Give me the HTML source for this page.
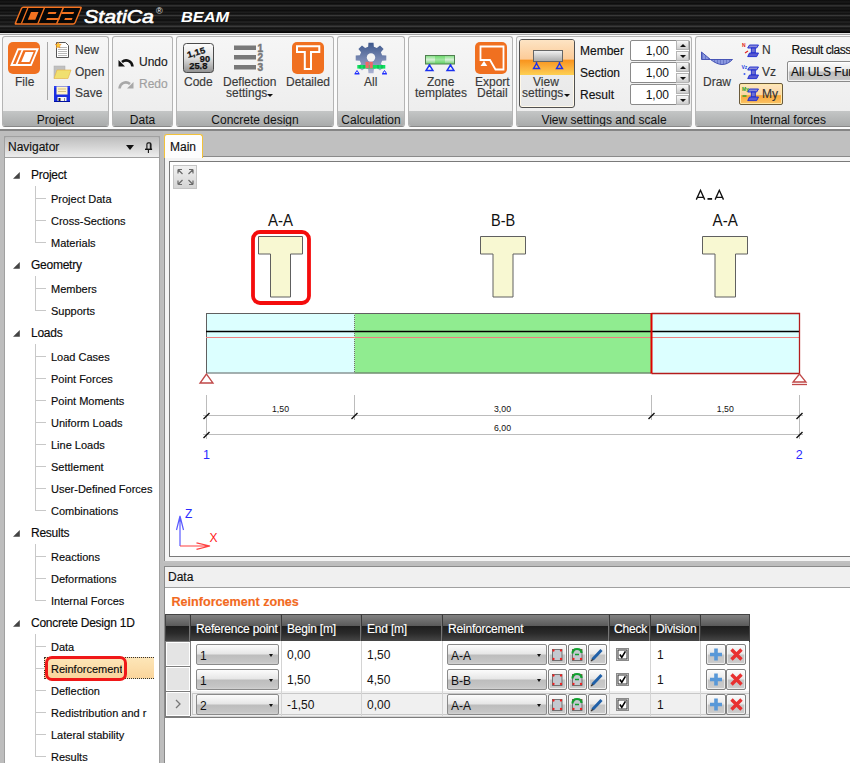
<!DOCTYPE html>
<html><head><meta charset="utf-8">
<style>
*{margin:0;padding:0;box-sizing:border-box}
html,body{width:850px;height:763px;overflow:hidden;background:#bdbdbd;font-family:"Liberation Sans",sans-serif;position:relative}
.a{position:absolute}
svg{position:absolute;overflow:visible}
#hdr{left:0;top:0;width:850px;height:33px;background:linear-gradient(180deg,#0c0c0c 0,#1a1a1a 2px,#0a0a0a 4px,#262626 5px,#3a3a3a 6px,#101010 7px,#181818 9px,#0a0a0a 11px,#222 12px,#0d0d0d 14px,#383838 15.5px,#121212 17px,#1c1c1c 19px,#0a0a0a 20px,#262626 22px,#101010 24px,#3a3a3a 26.5px,#0f0f0f 28px,#202020 30px,#050505 32px)}
#rib{left:0;top:33px;width:850px;height:98px;background:#fbfbfb;border-top:1px solid #e4e4e4;border-bottom:2px solid #858585}
#rib:before{content:"";position:absolute;left:0;right:0;top:0;height:1px;background:#a4a4a4}
.grp{position:absolute;top:36px;height:91px;border:1px solid #b4b4b4;border-bottom-color:#888;border-radius:3px;background:linear-gradient(#f6f6f6,#ececec);overflow:hidden}
.grp .lbl{position:absolute;left:0;right:0;bottom:0;height:15px;background:linear-gradient(#c4c6c6,#a9abab);font-size:12px;color:#111;text-align:center;line-height:14px;padding-top:2px}
.t{position:absolute;white-space:nowrap;color:#3a3a3a;font-size:12px;line-height:14px;-webkit-text-stroke:0.15px currentColor}
.nav{font-size:11px;color:#0a0a0a}
.navp{font-size:12px;color:#0a0a0a;letter-spacing:-0.25px}
.vl{left:35px;width:1px;background:#c8c8c8}
.hl{left:36px;width:10px;height:1px;background:#c8c8c8}
.th{position:absolute;top:615px;height:26px;color:#fff;font-size:12px;line-height:26px;padding-left:6px;white-space:nowrap;overflow:hidden;border-left:1px solid #5a5a5a;border-right:1px solid #2a2a2a}
.cell{position:absolute;font-size:12px;color:#111;line-height:14px;white-space:nowrap}
.dd{position:absolute;height:21px;border:1px solid #8a8a8a;border-radius:2px;background:linear-gradient(#fcfcfc 0%,#e6e6e6 47%,#bdbdbd 53%,#c6c6c6 90%,#d2d2d2 100%);font-size:12px;color:#111;padding-left:3px;line-height:22px}
.dd:after{content:"";position:absolute;right:5px;top:9px;border-left:2.5px solid transparent;border-right:2.5px solid transparent;border-top:3px solid #111}
.sb{position:absolute;width:19px;height:21px;border:1px solid #808080;border-radius:2px;background:linear-gradient(#fcfcfc 0%,#e8e8e8 47%,#c4c4c4 53%,#cacaca 90%,#d4d4d4 100%);box-shadow:inset 0 0 0 1px rgba(255,255,255,.6)}
.spin{position:absolute;left:630px;width:60px;height:21px;background:#fff;border:1px solid #8a8a8a;border-radius:2px;font-size:12px;color:#111;text-align:right;padding-right:20px;line-height:20px}
.sp{position:absolute;left:676px;width:13px;height:10px;border:1px solid #b4b4b4;background:linear-gradient(#f8f8f8,#cccccc)}
.sp:after{content:"";position:absolute;left:3px;top:3px;border-left:3px solid transparent;border-right:3px solid transparent;border-bottom:3px solid #111}
.sp.dn:after{border-bottom:none;border-top:3px solid #111}
</style></head><body>
<div id="hdr" class="a"></div>
<!-- logo -->
<svg style="left:0;top:0" width="240" height="33">
 <g transform="matrix(1,0,-0.41,1,21.5,6.4)">
  <rect x="0" y="0" width="61" height="18.3" rx="2" fill="#f27220"/>
  <rect x="1.5" y="1.5" width="58" height="15.3" rx="1" fill="#060606"/>
  <rect x="6.2" y="1" width="1.4" height="16" fill="#f27220"/>
  <rect x="11.8" y="5.6" width="7.5" height="7.8" fill="#f27220"/>
  <rect x="22.7" y="1" width="1.5" height="16" fill="#f27220"/>
  <rect x="29.3" y="5.6" width="8" height="2.1" fill="#f27220"/>
  <rect x="30.2" y="11.5" width="13" height="2.1" fill="#f27220"/>
  <rect x="41.4" y="1" width="1.7" height="16" fill="#f27220"/>
  <rect x="43" y="5.6" width="12" height="2.1" fill="#f27220"/>
  <rect x="48.3" y="11.5" width="7.5" height="2.1" fill="#f27220"/>
 </g>
 <text x="84" y="23" font-family="Liberation Sans" font-size="18.5" font-style="italic" fill="#fff" stroke="#fff" stroke-width="0.6" textLength="70" lengthAdjust="spacingAndGlyphs">StatiCa</text>
 <text x="156" y="14" font-family="Liberation Sans" font-size="9" fill="#eee">®</text>
 <text x="181" y="22" font-family="Liberation Sans" font-size="15" font-weight="bold" font-style="italic" fill="#fff" textLength="48" lengthAdjust="spacingAndGlyphs">BEAM</text>
</svg>

<div id="rib" class="a"></div>

<!-- ribbon groups -->
<div class="grp" style="left:2px;width:107px"><div class="lbl">Project</div></div>
<div class="grp" style="left:112px;width:61px"><div class="lbl">Data</div></div>
<div class="grp" style="left:176px;width:158px"><div class="lbl">Concrete design</div></div>
<div class="grp" style="left:337px;width:68px"><div class="lbl">Calculation</div></div>
<div class="grp" style="left:408px;width:105px"><div class="lbl"></div></div>
<div class="grp" style="left:516px;width:176px"><div class="lbl">View settings and scale</div></div>
<div class="grp" style="left:695px;width:186px"><div class="lbl">Internal forces</div></div>

<!-- Project group -->
<svg style="left:8px;top:42px" width="32" height="32">
 <rect x="0" y="0" width="32" height="32" rx="5" fill="#f07020"/>
 <g transform="matrix(1,0,-0.42,1,9.5,6.3)">
  <rect x="1" y="1" width="19.5" height="15.7" fill="none" stroke="#fff" stroke-width="2"/>
  <rect x="4.8" y="1" width="1.9" height="15.7" fill="#fff"/>
  <rect x="9.5" y="3.8" width="8.2" height="10" fill="#fff"/>
 </g>
</svg>
<div class="t" style="left:15px;top:75px">File</div>
<div class="a" style="left:47px;top:42px;width:1px;height:58px;background:#a8a8a8"></div>
<svg style="left:55px;top:42px" width="16" height="16">
 <path d="M1.5 0.5h9l3 3v12h-12z" fill="#fff" stroke="#555"/>
 <path d="M3 5.5h9M3 7.5h9M3 9.5h9M3 11.5h9M3 13.5h9" stroke="#b0b0b0" stroke-width="0.9"/>
 <path d="M3.20 0.20 L4.02 2.27 L6.24 2.41 L4.53 3.83 L5.08 5.99 L3.20 4.80 L1.32 5.99 L1.87 3.83 L0.16 2.41 L2.38 2.27Z" fill="#ffd030" stroke="#f08a20" stroke-width="0.6"/>
</svg>
<div class="t" style="left:75px;top:43px">New</div>
<svg style="left:54px;top:66px" width="17" height="13">
 <rect x="0" y="0" width="11" height="12" fill="#c0c0c0" stroke="#aaa" stroke-width="0.5"/>
 <path d="M3 4h14l-3 8.5h-14z" fill="#f0e070" stroke="#e8b040" stroke-width="0.6"/>
</svg>
<div class="t" style="left:75px;top:65px">Open</div>
<svg style="left:54px;top:86px" width="16" height="16">
 <rect x="0" y="0" width="16" height="16" fill="#1a2ee0"/>
 <rect x="0" y="0" width="16" height="2" fill="#2a3ef0"/>
 <rect x="2.5" y="0.5" width="11" height="8" fill="#fff4c8"/>
 <path d="M4 3h8M4 5.5h8" stroke="#c8b070" stroke-width="0.8"/>
 <rect x="3.5" y="11" width="9" height="5" fill="#f4f4f4"/>
 <rect x="4.5" y="12" width="2" height="4" fill="#222"/>
 <rect x="10" y="12" width="1" height="4" fill="#888"/>
 <rect x="0" y="15" width="16" height="1" fill="#0010a0"/>
</svg>
<div class="t" style="left:75px;top:86px">Save</div>

<!-- Data group -->
<svg style="left:118px;top:57px" width="16" height="11">
 <path d="M14.5 9.5 C14 4, 8 1.5, 4 5" stroke="#111" stroke-width="2.6" fill="none"/>
 <path d="M0.5 3 L0.5 9.5 L7 9.5Z" fill="#111"/>
</svg>
<div class="t" style="left:139px;top:55px;color:#1a1a1a">Undo</div>
<svg style="left:118px;top:79px" width="16" height="11">
 <path d="M1.5 9.5 C2 4, 8 1.5, 12 5" stroke="#a8a8a8" stroke-width="2.6" fill="none"/>
 <path d="M15.5 3 L15.5 9.5 L9 9.5Z" fill="#a8a8a8"/>
</svg>
<div class="t" style="left:139px;top:77px;color:#a0a0a0">Redo</div>

<!-- Concrete design -->
<svg style="left:183px;top:43px" width="31" height="30">
 <defs><linearGradient id="gc" x1="0" y1="0" x2="0" y2="1"><stop offset="0" stop-color="#fdfdfd"/><stop offset="0.5" stop-color="#e0e0e0"/><stop offset="1" stop-color="#909090"/></linearGradient></defs>
 <rect x="0.5" y="0.5" width="30" height="29" rx="3" fill="url(#gc)" stroke="#4a4a4a"/>
 <g font-family="Liberation Sans" font-weight="bold" fill="#111" stroke="#111" stroke-width="0.25">
 <text x="5" y="15" font-size="8.6" transform="rotate(-16 5 15)" textLength="18.5" lengthAdjust="spacingAndGlyphs">1,15</text>
 <text x="16.8" y="18.8" font-size="8.4" textLength="10.2" lengthAdjust="spacingAndGlyphs">90</text>
 <text x="6.2" y="25.6" font-size="8.6" textLength="18.2" lengthAdjust="spacingAndGlyphs">25.8</text>
 </g>
</svg>
<div class="t" style="left:184px;top:75px">Code</div>
<svg style="left:233px;top:44px" width="34" height="28">
 <rect x="1" y="1.5" width="22" height="4.5" fill="#787878"/>
 <rect x="1" y="11" width="22" height="4.5" fill="#787878"/>
 <rect x="1" y="21" width="22" height="4.5" fill="#787878"/>
 <g font-family="Liberation Sans" font-size="10" font-weight="bold" fill="#787878" stroke="#787878" stroke-width="0.5">
 <text x="24.5" y="7.5">1</text><text x="24.5" y="17">2</text><text x="24.5" y="27">3</text>
 </g>
</svg>
<div class="t" style="left:223px;top:75px">Deflection</div>
<div class="t" style="left:226px;top:86px">settings</div>
<div class="a" style="left:267px;top:94px;border-left:3px solid transparent;border-right:3px solid transparent;border-top:3px solid #111"></div>
<svg style="left:292px;top:42px" width="32" height="32">
 <rect x="0" y="0" width="32" height="32" rx="5" fill="#f07020"/>
 <path d="M5 4.2H27.3V10H19V27H12.8V10H5Z" fill="none" stroke="#fff" stroke-width="2"/>
</svg>
<div class="t" style="left:286px;top:75px">Detailed</div>

<!-- Calculation -->
<svg style="left:353px;top:40px" width="36" height="36">
 <defs><linearGradient id="gg" x1="0" y1="0" x2="0" y2="1"><stop offset="0" stop-color="#3d578c"/><stop offset="1" stop-color="#aab2d2"/></linearGradient></defs>
 <path transform="translate(18,18)" d="M-2.86 -11.14 L-2.54 -15.29 L2.54 -15.29 L2.86 -11.14 L5.85 -9.90 L9.01 -12.61 L12.61 -9.01 L9.90 -5.85 L11.14 -2.86 L15.29 -2.54 L15.29 2.54 L11.14 2.86 L9.90 5.85 L12.61 9.01 L9.01 12.61 L5.85 9.90 L2.86 11.14 L2.54 15.29 L-2.54 15.29 L-2.86 11.14 L-5.85 9.90 L-9.01 12.61 L-12.61 9.01 L-9.90 5.85 L-11.14 2.86 L-15.29 2.54 L-15.29 -2.54 L-11.14 -2.86 L-9.90 -5.85 L-12.61 -9.01 L-9.01 -12.61 L-5.85 -9.90Z" fill="url(#gg)"/>
 <circle cx="18" cy="17.5" r="4.2" fill="#f4f4f4"/>
 <rect x="4.3" y="25" width="28" height="3.6" fill="#10e060"/>
 <path d="M7 25v3.6M11 25v3.6M25 25v3.6M29 25v3.6" stroke="#0a9a40" stroke-width="0.7"/>
 <rect x="12.5" y="21.8" width="3.3" height="6.5" fill="#f06868"/>
 <rect x="16.5" y="21.8" width="3.3" height="6.5" fill="#f06868"/>
 <path d="M4 30.5l-2 3h4z M31.5 30.5l-2 3h4z" fill="none" stroke="#2030ff" stroke-width="1"/>
 <path d="M1.5 34h5M29 34h5" stroke="#2030ff" stroke-width="1"/>
</svg>
<div class="t" style="left:364px;top:75px">All</div>

<!-- zone templates -->
<svg style="left:423px;top:53px" width="34" height="19">
 <defs><linearGradient id="gz" x1="0" y1="0" x2="0" y2="1"><stop offset="0" stop-color="#80e080"/><stop offset="0.5" stop-color="#d8f0d8"/><stop offset="1" stop-color="#70d070"/></linearGradient></defs>
 <rect x="2.5" y="2.5" width="29" height="8.5" fill="url(#gz)" stroke="#508050" stroke-width="1"/>
 <rect x="12" y="3" width="10" height="7.5" fill="#40d040" opacity="0.35"/>
 <path d="M6.5 12l-3.5 5.5h7z M27.5 12l-3.5 5.5h7z" fill="none" stroke="#1a30f0" stroke-width="1.4"/>
 <path d="M6.5 11v2M27.5 11v2" stroke="#1a30f0" stroke-width="1.4"/>
</svg>
<div class="t" style="left:427px;top:75px">Zone</div>
<div class="t" style="left:415px;top:86px">templates</div>
<svg style="left:475px;top:42px" width="32" height="32">
 <rect x="0" y="0" width="32" height="32" rx="5" fill="#f07020"/>
 <path d="M5.5 4.5h23v23h-8l-5.5-9.5h-9.5z" fill="none" stroke="#fff" stroke-width="1.8" stroke-linejoin="miter"/>
 <path d="M5.5 24l3.5-5 3.3 5z" fill="#fff"/>
</svg>
<div class="t" style="left:475px;top:75px">Export</div>
<div class="t" style="left:477px;top:86px">Detail</div>

<!-- view settings -->
<div class="a" style="left:519px;top:39px;width:56px;height:69px;border:1px solid #505050;border-radius:3px;background:linear-gradient(#f0f0f0,#e8e8e8);overflow:hidden;box-shadow:inset 0 0 0 1px #fff8e8">
 <div class="a" style="left:0;top:0;width:54px;height:35px;background:linear-gradient(#fde4c4 0%,#fccb98 55%,#f9931c 57%,#fbb23e 80%,#fdd052 100%)"></div>
</div>
<svg style="left:530px;top:50px" width="36" height="24">
 <defs><linearGradient id="gb" x1="0" y1="0" x2="0" y2="1"><stop offset="0" stop-color="#f4f4f4"/><stop offset="1" stop-color="#a8a8a8"/></linearGradient></defs>
 <rect x="3.5" y="0.5" width="29" height="11" fill="url(#gb)" stroke="#666"/>
 <path d="M6.5 13.5l-3 5h6z M29.5 13.5l-3 5h6z" fill="none" stroke="#1a30f0" stroke-width="1.4"/>
 <path d="M6.5 12v2M29.5 12v2" stroke="#1a30f0" stroke-width="1.4"/>
</svg>
<div class="t" style="left:533px;top:75px">View</div>
<div class="t" style="left:522px;top:86px">settings</div>
<div class="a" style="left:564px;top:94px;border-left:3px solid transparent;border-right:3px solid transparent;border-top:3px solid #111"></div>

<div class="t" style="left:580px;top:44px;color:#111">Member</div>
<div class="t" style="left:580px;top:66px;color:#111">Section</div>
<div class="t" style="left:580px;top:88px;color:#111">Result</div>
<div class="spin" style="top:40px">1,00</div>
<div class="spin" style="top:62px">1,00</div>
<div class="spin" style="top:84px">1,00</div>
<div class="sp" style="top:40px"></div><div class="sp dn" style="top:51px"></div>
<div class="sp" style="top:62px"></div><div class="sp dn" style="top:73px"></div>
<div class="sp" style="top:84px"></div><div class="sp dn" style="top:95px"></div>

<!-- internal forces -->
<svg style="left:700px;top:50px" width="34" height="16">
 <defs><pattern id="pd" width="3" height="10" patternUnits="userSpaceOnUse"><rect width="3" height="10" fill="#8a98e0"/><rect x="2" width="1" height="10" fill="#6a78c8"/></pattern></defs>
 <path d="M1.5 2 L10.5 9.5 Z" fill="none"/>
 <path d="M1.5 2 V9.5 H10.5 Z" fill="url(#pd)" stroke="#3a48b0" stroke-width="0.9"/>
 <path d="M10.5 9.5 C15 13, 19 14.5, 22 14.5 C26 14.5, 29 13, 32.5 9.5 Z" fill="url(#pd)" stroke="#3a48b0" stroke-width="0.9"/>
</svg>
<div class="t" style="left:703px;top:75px">Draw</div>
<div class="a" style="left:739px;top:83px;width:44px;height:22px;border:1px solid #6a5a3a;border-radius:2px;background:linear-gradient(#fde6c0 0%,#fcd6a0 55%,#f9a838 58%,#fbc468 100%);box-shadow:inset 0 0 0 1px #ffe8a8"></div>
<svg style="left:742px;top:42px" width="18" height="62">
 <defs><linearGradient id="gi" x1="0" y1="0" x2="1" y2="0"><stop offset="0" stop-color="#2030d8"/><stop offset="0.5" stop-color="#8a90e0"/><stop offset="1" stop-color="#2a38c8"/></linearGradient></defs>
 <g><path d="M7.5 3h9l-1.8 3h-9z" fill="#8a8ad8" stroke="#1a28d0" stroke-width="0.9"/><rect x="9.3" y="6" width="4" height="5" fill="#7070d0" stroke="#1a28d0" stroke-width="0.9"/><path d="M7.5 11h9l-1.8 3.6h-9z" fill="#5a5ad0" stroke="#1a28d0" stroke-width="0.9"/><path d="M7.5 25h9l-1.8 3h-9z" fill="#8a8ad8" stroke="#1a28d0" stroke-width="0.9"/><rect x="9.3" y="28" width="4" height="5" fill="#7070d0" stroke="#1a28d0" stroke-width="0.9"/><path d="M7.5 33h9l-1.8 3.6h-9z" fill="#5a5ad0" stroke="#1a28d0" stroke-width="0.9"/><path d="M7.5 47h9l-1.8 3h-9z" fill="#8a8ad8" stroke="#1a28d0" stroke-width="0.9"/><rect x="9.3" y="50" width="4" height="5" fill="#7070d0" stroke="#1a28d0" stroke-width="0.9"/><path d="M7.5 55h9l-1.8 3.6h-9z" fill="#5a5ad0" stroke="#1a28d0" stroke-width="0.9"/></g>
 <text x="0" y="5" font-family="Liberation Sans" font-size="5" font-weight="bold" fill="#e02020">N</text>
 <path d="M3 11l3-2" stroke="#e02020" stroke-width="1.2"/>
 <text x="-0.5" y="27" font-family="Liberation Sans" font-size="5" font-weight="bold" fill="#2040e0">Vz</text>
 <circle cx="2.5" cy="32" r="1" fill="#4060f0"/>
 <text x="0" y="49" font-family="Liberation Sans" font-size="5" font-weight="bold" fill="#20a020">My</text>
 <path d="M0.5 54h4" stroke="#20a020" stroke-width="1.3"/>
</svg>
<div class="t" style="left:762px;top:43px;color:#333">N</div>
<div class="t" style="left:762px;top:65px;color:#333">Vz</div>
<div class="t" style="left:762px;top:87px;color:#333">My</div>
<div class="t" style="left:791.5px;top:43px;color:#111;letter-spacing:-0.45px">Result class</div>
<div class="a" style="left:787px;top:60.5px;width:80px;height:21px;border:1px solid #8a8a8a;border-radius:2px;background:linear-gradient(#fcfcfc 0%,#e6e6e6 47%,#bdbdbd 53%,#c6c6c6 90%,#d2d2d2 100%);box-shadow:inset 0 0 0 1px rgba(255,255,255,.7)"></div>
<div class="t" style="left:791px;top:65px;color:#111">All ULS Fun</div>

<!-- navigator -->
<div class="a" style="left:4px;top:136px;width:156px;height:628px;background:#fff;border:1px solid #a0a0a0;border-bottom:none"></div>
<div class="a" style="left:4px;top:136px;width:156px;height:22px;background:linear-gradient(#bdbdbd,#ededed);border:1px solid #a0a0a0;border-radius:2px 2px 0 0"></div>
<div class="t" style="left:8px;top:140px;font-size:12px;color:#111">Navigator</div>
<div class="a" style="left:125.5px;top:145px;border-left:4px solid transparent;border-right:4px solid transparent;border-top:5px solid #111"></div>
<svg style="left:144px;top:142px" width="10" height="12">
 <path d="M2.9 7V2.3Q2.9 0.9 4.3 0.9H5.6Q7 0.9 7 2.3V7" stroke="#111" fill="none" stroke-width="1.1"/>
 <path d="M6.3 1.5V7" stroke="#111" stroke-width="1"/>
 <path d="M1 7.3H8.1" stroke="#111" stroke-width="1.4"/>
 <path d="M4.4 7.5V11" stroke="#111" stroke-width="1.1"/>
</svg>
<div class="a" style="left:0;top:0;width:154px;height:763px;overflow:hidden"><div class="a" style="left:44px;top:657px;width:120px;height:22px;background:linear-gradient(#fde6b8,#fad59c);border:1px dotted #333"></div></div>
<div class="a" style="left:0;top:158px;width:154px;height:605px;overflow:hidden"><div class="a" style="left:0;top:-158px;width:154px;height:763px"><div class="a vl" style="top:186px;height:57px"></div>
<div class="a vl" style="top:276px;height:35px"></div>
<div class="a vl" style="top:344px;height:167px"></div>
<div class="a vl" style="top:544px;height:57px"></div>
<div class="a vl" style="top:634px;height:123px"></div>
<svg class="a" style="left:13px;top:172px" width="8" height="8"><path d="M0 6.8L6.8 0V6.8Z" fill="#444"/></svg>
<div class="t navp" style="left:31px;top:168px">Project</div>
<div class="a hl" style="top:198px"></div>
<div class="t nav" style="left:51px;top:192px">Project Data</div>
<div class="a hl" style="top:220px"></div>
<div class="t nav" style="left:51px;top:214px">Cross-Sections</div>
<div class="a hl" style="top:242px"></div>
<div class="t nav" style="left:51px;top:236px">Materials</div>
<svg class="a" style="left:13px;top:262px" width="8" height="8"><path d="M0 6.8L6.8 0V6.8Z" fill="#444"/></svg>
<div class="t navp" style="left:31px;top:258px">Geometry</div>
<div class="a hl" style="top:288px"></div>
<div class="t nav" style="left:51px;top:282px">Members</div>
<div class="a hl" style="top:310px"></div>
<div class="t nav" style="left:51px;top:304px">Supports</div>
<svg class="a" style="left:13px;top:330px" width="8" height="8"><path d="M0 6.8L6.8 0V6.8Z" fill="#444"/></svg>
<div class="t navp" style="left:31px;top:326px">Loads</div>
<div class="a hl" style="top:356px"></div>
<div class="t nav" style="left:51px;top:350px">Load Cases</div>
<div class="a hl" style="top:378px"></div>
<div class="t nav" style="left:51px;top:372px">Point Forces</div>
<div class="a hl" style="top:400px"></div>
<div class="t nav" style="left:51px;top:394px">Point Moments</div>
<div class="a hl" style="top:422px"></div>
<div class="t nav" style="left:51px;top:416px">Uniform Loads</div>
<div class="a hl" style="top:444px"></div>
<div class="t nav" style="left:51px;top:438px">Line Loads</div>
<div class="a hl" style="top:466px"></div>
<div class="t nav" style="left:51px;top:460px">Settlement</div>
<div class="a hl" style="top:488px"></div>
<div class="t nav" style="left:51px;top:482px">User-Defined Forces</div>
<div class="a hl" style="top:510px"></div>
<div class="t nav" style="left:51px;top:504px">Combinations</div>
<svg class="a" style="left:13px;top:530px" width="8" height="8"><path d="M0 6.8L6.8 0V6.8Z" fill="#444"/></svg>
<div class="t navp" style="left:31px;top:526px">Results</div>
<div class="a hl" style="top:556px"></div>
<div class="t nav" style="left:51px;top:550px">Reactions</div>
<div class="a hl" style="top:578px"></div>
<div class="t nav" style="left:51px;top:572px">Deformations</div>
<div class="a hl" style="top:600px"></div>
<div class="t nav" style="left:51px;top:594px">Internal Forces</div>
<svg class="a" style="left:13px;top:620px" width="8" height="8"><path d="M0 6.8L6.8 0V6.8Z" fill="#444"/></svg>
<div class="t navp" style="left:31px;top:616px">Concrete Design 1D</div>
<div class="a hl" style="top:646px"></div>
<div class="t nav" style="left:51px;top:640px">Data</div>
<div class="a hl" style="top:668px"></div>
<div class="t nav" style="left:51px;top:662px;width:71px;overflow:hidden">Reinforcement</div>
<div class="a hl" style="top:690px"></div>
<div class="t nav" style="left:51px;top:684px">Deflection</div>
<div class="a hl" style="top:712px"></div>
<div class="t nav" style="left:51px;top:706px">Redistribution and r</div>
<div class="a hl" style="top:734px"></div>
<div class="t nav" style="left:51px;top:728px">Lateral stability</div>
<div class="a hl" style="top:756px"></div>
<div class="t nav" style="left:51px;top:750px">Results</div></div></div>

<div class="a" style="left:44.5px;top:655.5px;width:82px;height:25px;border:3.6px solid #f01818;border-radius:7px"></div>

<!-- main tab area -->
<div class="a" style="left:163px;top:131px;width:687px;height:432px;background:#c0c0c0"></div>
<div class="a" style="left:164px;top:156px;width:686px;height:405px;background:#f4f4f4;border-top:1px solid #8a8a8a;border-left:1px solid #8a8a8a"></div>
<div class="a" style="left:169px;top:161px;width:681px;height:396px;background:#fff;border:1px solid #7a7a7a;border-right:none"></div>
<div class="a" style="left:164px;top:134px;width:39px;height:24px;background:#fdfdfd;border:1px solid #f2c23a;border-bottom:none;border-radius:3px 3px 0 0"></div>
<div class="t" style="left:170px;top:140px;font-size:12px;color:#111">Main</div>

<!-- canvas drawing -->
<svg style="left:0;top:0" width="850" height="763">
 <defs><linearGradient id="gx" x1="0" y1="0" x2="0" y2="1"><stop offset="0" stop-color="#f2f2f2"/><stop offset="1" stop-color="#d4d4d4"/></linearGradient></defs>
 <rect x="173.5" y="165.5" width="23" height="23" fill="url(#gx)" stroke="#c4c4c4"/>
 <g stroke="#6a6a6a" stroke-width="1.2" fill="none">
  <path d="M178 169.5l4.5 4.5M178 169.5v4M178 169.5h4"/>
  <path d="M193 169.5l-4.5 4.5M193 169.5v4M193 169.5h-4"/>
  <path d="M178 184.5l4.5-4.5M178 184.5v-4M178 184.5h4"/>
  <path d="M193 184.5l-4.5-4.5M193 184.5v-4M193 184.5h-4"/>
 </g>
 <!-- section labels -->
 <text x="268" y="226.2" font-family="Liberation Sans" font-size="16.3" fill="#111" textLength="25" lengthAdjust="spacingAndGlyphs">A-A</text>
 <text x="491" y="226.2" font-family="Liberation Sans" font-size="16.3" fill="#111" textLength="24.2" lengthAdjust="spacingAndGlyphs">B-B</text>
 <text x="712.6" y="226.2" font-family="Liberation Sans" font-size="16.3" fill="#111" textLength="25.2" lengthAdjust="spacingAndGlyphs">A-A</text>
 <path d="M696.3 199.6L700.5 190.3L704.7 199.6M697.6 197.4H703.4M715.1 199.6L719.3 190.3L723.5 199.6M716.4 197.4H722.2" stroke="#111" stroke-width="1.35" fill="none"/>
 <rect x="707.5" y="198" width="4.6" height="1.8" fill="#111"/>
 <!-- T sections -->
 <g fill="#f8f8d2" stroke="#606060" stroke-width="1">
  <path d="M258.5 236.5h44v17.5h-12v43h-20v-43h-12z"/>
  <path d="M480.5 236.5h45v17.5h-12.5v43h-20v-43h-12.5z"/>
  <path d="M702.5 236.5h45v17.5h-12v43h-20.5v-43h-12.5z"/>
 </g>
 <rect x="253" y="232" width="56" height="71" rx="7" fill="none" stroke="#f40c0c" stroke-width="3.8"/>
 <!-- beam -->
 <rect x="206" y="313" width="148.5" height="60.5" fill="#dcffff"/>
 <rect x="354.5" y="313" width="296.5" height="60.5" fill="#90ec90"/>
 <rect x="651" y="313" width="148.5" height="60.5" fill="#dcffff"/>
 <path d="M206 313.5H651M206 373H651M206.5 313V373" stroke="#606060" stroke-width="1" fill="none"/>
 <path d="M354.5 313V373" stroke="#707070" stroke-width="1" stroke-dasharray="1,1" fill="none"/>
 <path d="M206 331.5H799" stroke="#000" stroke-width="1.3"/>
 <path d="M206 337.5H799" stroke="#f08080" stroke-width="1"/>
 <path d="M651.5 313.5H799.5V373.5H651.5" stroke="#b41c1c" stroke-width="1.3" fill="none"/>
 <path d="M651.5 313V373.5" stroke="#e00000" stroke-width="2" fill="none"/>
 <!-- supports -->
 <path d="M206.5 374l-6.5 9h13z" fill="none" stroke="#c04848" stroke-width="1.3"/>
 <path d="M799.5 374l-6.5 8h13z" fill="none" stroke="#c04848" stroke-width="1.3"/>
 <path d="M792 384.5h15" stroke="#c04848" stroke-width="1.3"/>
 <!-- dimensions -->
 <g stroke="#bcbcbc" stroke-width="1" fill="none">
  <path d="M206.5 395v44M354.5 395v25M651.5 395v25M799.5 395v44"/>
  <path d="M203 415.5h600M203 434.5h600"/>
 </g>
 <g stroke="#111" stroke-width="1.4">
  <path d="M203.5 419l6-6M351.5 419l6-6M648.5 419l6-6M796.5 419l6-6"/>
  <path d="M203.5 438l6-6M796.5 438l6-6"/>
 </g>
 <g font-family="Liberation Sans" font-size="9.8" fill="#111">
  <text x="272" y="412" textLength="17" lengthAdjust="spacingAndGlyphs">1,50</text>
  <text x="494" y="412" textLength="17" lengthAdjust="spacingAndGlyphs">3,00</text>
  <text x="716.8" y="412" textLength="17" lengthAdjust="spacingAndGlyphs">1,50</text>
  <text x="494" y="430.5" textLength="17" lengthAdjust="spacingAndGlyphs">6,00</text>
 </g>
 <text x="206.5" y="459" font-family="Liberation Sans" font-size="12.5" text-anchor="middle" fill="#2a2aff">1</text>
 <text x="799.2" y="459" font-family="Liberation Sans" font-size="12.5" text-anchor="middle" fill="#2a2aff">2</text>
 <!-- axes -->
 <path d="M180 546V516M176.5 530L180 516L183.5 530" stroke="#5a5aff" stroke-width="1.2" fill="none"/>
 <path d="M180 546H210M196.5 542.8L210 546L196.5 549.4" stroke="#ff4040" stroke-width="1.2" fill="none"/>
 <text x="185" y="518" font-family="Liberation Sans" font-size="12" fill="#2a2aff">Z</text>
 <text x="209.5" y="542" font-family="Liberation Sans" font-size="12" fill="#ff2020">X</text>
</svg>

<!-- data panel -->
<div class="a" style="left:164px;top:566px;width:686px;height:198px;background:#fff;border:1px solid #8a8a8a;border-right:none;border-bottom:none"></div>
<div class="a" style="left:165px;top:567px;width:685px;height:21px;background:#f0f0f0;border-bottom:1px solid #a0a0a0"></div>
<div class="t" style="left:168px;top:570px;font-size:12px;color:#111">Data</div>
<div class="t" style="left:171.5px;top:595px;font-size:12.6px;font-weight:bold;color:#f26a1e">Reinforcement zones</div>

<!-- table -->
<div class="a" style="left:165px;top:614px;width:585px;height:104px;background:#fff;border:1px solid #7c7c7c"></div>
<div class="a" style="left:165px;top:614px;width:585px;height:28px;border:1px solid #444;border-bottom-color:#2a2a2a;background:linear-gradient(#828282 0%,#5a5a5a 42%,#1e1e1e 43%,#2a2a2a 70%,#464646 100%)"></div>
<div class="a" style="left:189px;top:615px;width:1px;height:26px;background:#767676"></div>
<div class="a" style="left:190px;top:615px;width:1px;height:26px;background:#3a3a3a"></div>
<div class="t" style="left:196px;top:621px;color:#fff;font-size:12px;line-height:17px;letter-spacing:-0.2px">Reference point</div>
<div class="a" style="left:280px;top:615px;width:1px;height:26px;background:#767676"></div>
<div class="a" style="left:281px;top:615px;width:1px;height:26px;background:#3a3a3a"></div>
<div class="t" style="left:287px;top:621px;color:#fff;font-size:12px;line-height:17px;letter-spacing:-0.2px">Begin [m]</div>
<div class="a" style="left:360px;top:615px;width:1px;height:26px;background:#767676"></div>
<div class="a" style="left:361px;top:615px;width:1px;height:26px;background:#3a3a3a"></div>
<div class="t" style="left:367px;top:621px;color:#fff;font-size:12px;line-height:17px;letter-spacing:-0.2px">End [m]</div>
<div class="a" style="left:441px;top:615px;width:1px;height:26px;background:#767676"></div>
<div class="a" style="left:442px;top:615px;width:1px;height:26px;background:#3a3a3a"></div>
<div class="t" style="left:448px;top:621px;color:#fff;font-size:12px;line-height:17px;letter-spacing:-0.2px">Reinforcement</div>
<div class="a" style="left:608px;top:615px;width:1px;height:26px;background:#767676"></div>
<div class="a" style="left:609px;top:615px;width:1px;height:26px;background:#3a3a3a"></div>
<div class="t" style="left:614px;top:621px;color:#fff;font-size:12px;line-height:17px;letter-spacing:-0.2px">Check</div>
<div class="a" style="left:649px;top:615px;width:1px;height:26px;background:#767676"></div>
<div class="a" style="left:650px;top:615px;width:1px;height:26px;background:#3a3a3a"></div>
<div class="t" style="left:656px;top:621px;color:#fff;font-size:12px;line-height:17px;letter-spacing:-0.2px">Division</div>
<div class="a" style="left:699px;top:615px;width:1px;height:26px;background:#767676"></div>
<div class="a" style="left:700px;top:615px;width:1px;height:26px;background:#3a3a3a"></div>
<div class="a" style="left:190px;top:641px;width:559px;height:25px;background:#fff"></div>
<div class="a" style="left:165px;top:641px;width:26px;height:26px;background:#e4e4e4;border:1px solid #7c7c7c;box-shadow:inset 0 0 0 1px #fff"></div>
<div class="a" style="left:190px;top:666px;width:559px;height:1px;background:#d4d4d4"></div>
<div class="a" style="left:281px;top:641px;width:1px;height:25px;background:#d4d4d4"></div>
<div class="a" style="left:361px;top:641px;width:1px;height:25px;background:#d4d4d4"></div>
<div class="a" style="left:442px;top:641px;width:1px;height:25px;background:#d4d4d4"></div>
<div class="a" style="left:609px;top:641px;width:1px;height:25px;background:#d4d4d4"></div>
<div class="a" style="left:650px;top:641px;width:1px;height:25px;background:#d4d4d4"></div>
<div class="a" style="left:700px;top:641px;width:1px;height:25px;background:#d4d4d4"></div>
<div class="dd" style="left:196px;top:644px;width:83px">1</div>
<div class="cell" style="left:287px;top:648px">0,00</div>
<div class="cell" style="left:367px;top:648px">1,50</div>
<div class="dd" style="left:447px;top:644px;width:100px">A-A</div>
<div class="sb" style="left:548px;top:644px"></div>
<div class="sb" style="left:568px;top:644px"></div>
<div class="sb" style="left:588px;top:644px"></div>
<svg style="left:548px;top:644px" width="60" height="21"><rect x="4.5" y="5.5" width="9.5" height="11" fill="#c4c8cf" stroke="#5a5a5a" stroke-width="0.8"/><circle cx="5.5" cy="6.5" r="1.15" fill="#f02020"/><circle cx="13" cy="6.5" r="1.15" fill="#f02020"/><circle cx="5.5" cy="15" r="1.15" fill="#f02020"/><circle cx="13" cy="15" r="1.15" fill="#f02020"/><rect x="24.5" y="5.5" width="9.5" height="11" fill="#c4c8cf" stroke="#5a5a5a" stroke-width="0.8"/><circle cx="25.5" cy="6.5" r="1.15" fill="#f02020"/><circle cx="33" cy="6.5" r="1.15" fill="#f02020"/><circle cx="25.5" cy="15" r="1.15" fill="#f02020"/><circle cx="33" cy="15" r="1.15" fill="#f02020"/><path d="M24.5 9.5c0-3 2-4.5 4.5-4.5s4.5 1.5 4.5 4" stroke="#10a030" stroke-width="2.2" fill="none"/><path d="M27 10.5h4" stroke="#10a030" stroke-width="1.5"/><path d="M44.5 15.5l9-9.5" stroke="#2060a8" stroke-width="3"/><path d="M43.2 17l1.6-1.8" stroke="#333" stroke-width="1.5"/></svg>
<svg style="left:616px;top:648px" width="13" height="13"><rect x="0.5" y="0.5" width="12" height="12" fill="#f4f4f4" stroke="#8a8a8a"/><rect x="2" y="2" width="9" height="9" fill="#fff" stroke="#333" stroke-width="1"/><path d="M3.8 6.5l2 2.8 3.6-6" stroke="#000" stroke-width="1.6" fill="none"/></svg>
<div class="cell" style="left:657px;top:648px">1</div>
<div class="sb" style="left:706px;top:644px;width:20px"></div>
<div class="sb" style="left:726px;top:644px;width:20px"></div>
<svg style="left:706px;top:644px" width="42" height="21"><path d="M10 4.5v12M4 10.5h12" stroke="#5898d8" stroke-width="3.6"/><path d="M25.5 5.5l10 10M35.5 5.5l-10 10" stroke="#e83030" stroke-width="3.4"/></svg>
<div class="a" style="left:190px;top:666px;width:559px;height:25px;background:#fff"></div>
<div class="a" style="left:165px;top:666px;width:26px;height:26px;background:#e4e4e4;border:1px solid #7c7c7c;box-shadow:inset 0 0 0 1px #fff"></div>
<div class="a" style="left:190px;top:691px;width:559px;height:1px;background:#d4d4d4"></div>
<div class="a" style="left:281px;top:666px;width:1px;height:25px;background:#d4d4d4"></div>
<div class="a" style="left:361px;top:666px;width:1px;height:25px;background:#d4d4d4"></div>
<div class="a" style="left:442px;top:666px;width:1px;height:25px;background:#d4d4d4"></div>
<div class="a" style="left:609px;top:666px;width:1px;height:25px;background:#d4d4d4"></div>
<div class="a" style="left:650px;top:666px;width:1px;height:25px;background:#d4d4d4"></div>
<div class="a" style="left:700px;top:666px;width:1px;height:25px;background:#d4d4d4"></div>
<div class="dd" style="left:196px;top:669px;width:83px">1</div>
<div class="cell" style="left:287px;top:673px">1,50</div>
<div class="cell" style="left:367px;top:673px">4,50</div>
<div class="dd" style="left:447px;top:669px;width:100px">B-B</div>
<div class="sb" style="left:548px;top:669px"></div>
<div class="sb" style="left:568px;top:669px"></div>
<div class="sb" style="left:588px;top:669px"></div>
<svg style="left:548px;top:669px" width="60" height="21"><rect x="4.5" y="5.5" width="9.5" height="11" fill="#c4c8cf" stroke="#5a5a5a" stroke-width="0.8"/><circle cx="5.5" cy="6.5" r="1.15" fill="#f02020"/><circle cx="13" cy="6.5" r="1.15" fill="#f02020"/><circle cx="5.5" cy="15" r="1.15" fill="#f02020"/><circle cx="13" cy="15" r="1.15" fill="#f02020"/><rect x="24.5" y="5.5" width="9.5" height="11" fill="#c4c8cf" stroke="#5a5a5a" stroke-width="0.8"/><circle cx="25.5" cy="6.5" r="1.15" fill="#f02020"/><circle cx="33" cy="6.5" r="1.15" fill="#f02020"/><circle cx="25.5" cy="15" r="1.15" fill="#f02020"/><circle cx="33" cy="15" r="1.15" fill="#f02020"/><path d="M24.5 9.5c0-3 2-4.5 4.5-4.5s4.5 1.5 4.5 4" stroke="#10a030" stroke-width="2.2" fill="none"/><path d="M27 10.5h4" stroke="#10a030" stroke-width="1.5"/><path d="M44.5 15.5l9-9.5" stroke="#2060a8" stroke-width="3"/><path d="M43.2 17l1.6-1.8" stroke="#333" stroke-width="1.5"/></svg>
<svg style="left:616px;top:673px" width="13" height="13"><rect x="0.5" y="0.5" width="12" height="12" fill="#f4f4f4" stroke="#8a8a8a"/><rect x="2" y="2" width="9" height="9" fill="#fff" stroke="#333" stroke-width="1"/><path d="M3.8 6.5l2 2.8 3.6-6" stroke="#000" stroke-width="1.6" fill="none"/></svg>
<div class="cell" style="left:657px;top:673px">1</div>
<div class="sb" style="left:706px;top:669px;width:20px"></div>
<div class="sb" style="left:726px;top:669px;width:20px"></div>
<svg style="left:706px;top:669px" width="42" height="21"><path d="M10 4.5v12M4 10.5h12" stroke="#5898d8" stroke-width="3.6"/><path d="M25.5 5.5l10 10M35.5 5.5l-10 10" stroke="#e83030" stroke-width="3.4"/></svg>
<div class="a" style="left:190px;top:691px;width:559px;height:25px;background:#f0f0f0"></div>
<div class="a" style="left:165px;top:691px;width:26px;height:26px;background:#e4e4e4;border:1px solid #7c7c7c;box-shadow:inset 0 0 0 1px #fff"></div>
<div class="a" style="left:192px;top:693px;width:557px;height:22px;border:1px solid #c8c8c8;border-right:none"></div>
<svg style="left:174px;top:699px" width="8" height="10"><path d="M2 1l4 4-4 4" stroke="#777" stroke-width="1.3" fill="none"/></svg>
<div class="a" style="left:190px;top:716px;width:559px;height:1px;background:#d4d4d4"></div>
<div class="a" style="left:281px;top:691px;width:1px;height:25px;background:#d4d4d4"></div>
<div class="a" style="left:361px;top:691px;width:1px;height:25px;background:#d4d4d4"></div>
<div class="a" style="left:442px;top:691px;width:1px;height:25px;background:#d4d4d4"></div>
<div class="a" style="left:609px;top:691px;width:1px;height:25px;background:#d4d4d4"></div>
<div class="a" style="left:650px;top:691px;width:1px;height:25px;background:#d4d4d4"></div>
<div class="a" style="left:700px;top:691px;width:1px;height:25px;background:#d4d4d4"></div>
<div class="dd" style="left:196px;top:694px;width:83px">2</div>
<div class="cell" style="left:287px;top:698px">-1,50</div>
<div class="cell" style="left:367px;top:698px">0,00</div>
<div class="dd" style="left:447px;top:694px;width:100px">A-A</div>
<div class="sb" style="left:548px;top:694px"></div>
<div class="sb" style="left:568px;top:694px"></div>
<div class="sb" style="left:588px;top:694px"></div>
<svg style="left:548px;top:694px" width="60" height="21"><rect x="4.5" y="5.5" width="9.5" height="11" fill="#c4c8cf" stroke="#5a5a5a" stroke-width="0.8"/><circle cx="5.5" cy="6.5" r="1.15" fill="#f02020"/><circle cx="13" cy="6.5" r="1.15" fill="#f02020"/><circle cx="5.5" cy="15" r="1.15" fill="#f02020"/><circle cx="13" cy="15" r="1.15" fill="#f02020"/><rect x="24.5" y="5.5" width="9.5" height="11" fill="#c4c8cf" stroke="#5a5a5a" stroke-width="0.8"/><circle cx="25.5" cy="6.5" r="1.15" fill="#f02020"/><circle cx="33" cy="6.5" r="1.15" fill="#f02020"/><circle cx="25.5" cy="15" r="1.15" fill="#f02020"/><circle cx="33" cy="15" r="1.15" fill="#f02020"/><path d="M24.5 9.5c0-3 2-4.5 4.5-4.5s4.5 1.5 4.5 4" stroke="#10a030" stroke-width="2.2" fill="none"/><path d="M27 10.5h4" stroke="#10a030" stroke-width="1.5"/><path d="M44.5 15.5l9-9.5" stroke="#2060a8" stroke-width="3"/><path d="M43.2 17l1.6-1.8" stroke="#333" stroke-width="1.5"/></svg>
<svg style="left:616px;top:698px" width="13" height="13"><rect x="0.5" y="0.5" width="12" height="12" fill="#f4f4f4" stroke="#8a8a8a"/><rect x="2" y="2" width="9" height="9" fill="#fff" stroke="#333" stroke-width="1"/><path d="M3.8 6.5l2 2.8 3.6-6" stroke="#000" stroke-width="1.6" fill="none"/></svg>
<div class="cell" style="left:657px;top:698px">1</div>
<div class="sb" style="left:706px;top:694px;width:20px"></div>
<div class="sb" style="left:726px;top:694px;width:20px"></div>
<svg style="left:706px;top:694px" width="42" height="21"><path d="M10 4.5v12M4 10.5h12" stroke="#5898d8" stroke-width="3.6"/><path d="M25.5 5.5l10 10M35.5 5.5l-10 10" stroke="#e83030" stroke-width="3.4"/></svg>

</body></html>
